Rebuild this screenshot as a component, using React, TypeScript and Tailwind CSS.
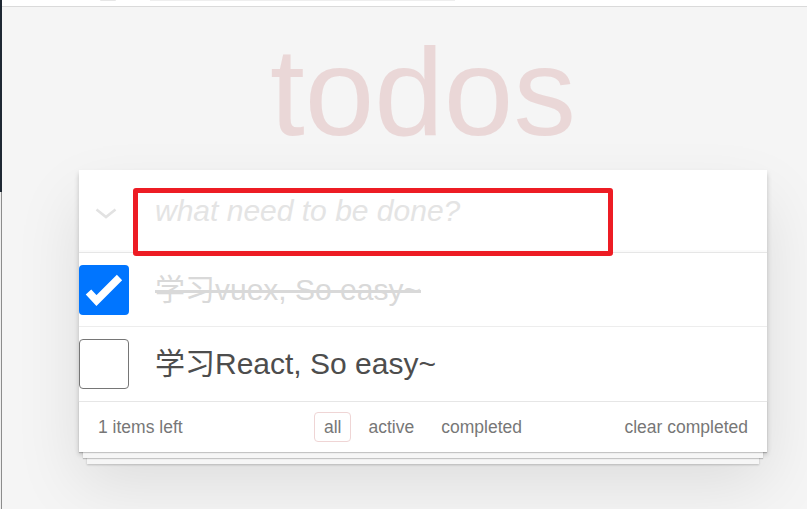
import React, { useState } from 'react';

type Todo = { id: number; title: string; done: boolean };

const initialTodos: Todo[] = [
  { id: 1, title: '学习vuex, So easy~', done: true },
  { id: 2, title: '学习React, So easy~', done: false },
];

const FILTERS = ['all', 'active', 'completed'];

const CheckBox: React.FC<{ checked: boolean }> = ({ checked }) =>
  checked ? (
    <div className="w-[50px] h-[50px] rounded-[4px] bg-[#0075ff] flex items-center justify-center shrink-0">
      <svg width="50" height="50" viewBox="0 0 50 50">
        <polyline points="9.5,27 17.5,35.5 40.5,12.5" fill="none" stroke="#ffffff" strokeWidth="7.5" />
      </svg>
    </div>
  ) : (
    <div className="w-[50px] h-[50px] rounded-[4px] bg-white border-[1.5px] border-[#767676] shrink-0" />
  );

export default function App() {
  const [todos] = useState<Todo[]>(initialTodos);
  const [filter] = useState('all');
  const left = todos.filter(t => !t.done).length;

  return (
    <div className="min-h-screen w-full flex bg-[#f5f5f5] font-['Liberation_Sans','Noto_Sans_CJK_SC',sans-serif]">
      {/* window edge */}
      <div className="w-[2px] shrink-0 flex flex-col">
        <div className="h-[192px] bg-[#1e2833]"></div>
        <div className="flex-1 flex">
          <div className="w-px bg-[#efefef]"></div>
          <div className="w-px bg-[#8c8c8c]"></div>
        </div>
      </div>

      <div className="flex-1 flex flex-col">
        {/* browser strip remnant */}
        <div className="h-[7px] bg-white border-b border-[#dadada] flex items-start">
          <div className="ml-[98px] w-[16px] h-[1px] bg-[#e6e6e6] rounded-b-full"></div>
          <div className="ml-[34px] w-[305px] h-[1px] bg-[#eeeeee]"></div>
        </div>

        <div className="pl-[77px] pt-[22px]">
          <div className="w-[688px]">
            <h1 className="text-center text-[125px] leading-[125px] text-[#ead7d7] font-normal select-none">
              todos
            </h1>

            <section className="mt-[16px] bg-white shadow-[0_2.5px_5px_0_rgba(0,0,0,0.2),0_31px_62px_0_rgba(0,0,0,0.1)]">
              {/* header */}
              <header className="relative z-10 h-[82px] flex items-start shadow-[inset_0_-2px_1px_rgba(0,0,0,0.02)]">
                <div className="w-[54px] shrink-0 pl-[16px] pt-[38px]">
                  <svg width="22" height="11" viewBox="0 0 22 11">
                    <polyline points="1.5,1.5 11,9 20.5,1.5" fill="none" stroke="#e2e2e2" strokeWidth="2.6" />
                  </svg>
                </div>
                <input
                  className="mt-[18px] w-[480px] h-[68px] border-[5px] border-[#ed1c24] rounded-[3px] pl-[17px] pt-0 pb-[23px] text-[30px] text-[#4d4d4d] outline-none bg-transparent placeholder:italic placeholder:text-[#e4e4e4]"
                  placeholder="what need to be done?"
                />
              </header>

              {/* list */}
              <ul className="border-t border-[#e6e6e6]">
                {todos.map((t, i) => (
                  <li
                    key={t.id}
                    className={
                      i < todos.length - 1
                        ? 'h-[74px] border-b border-[#ededed] flex items-center'
                        : 'h-[74px] flex items-center'
                    }
                  >
                    <CheckBox checked={t.done} />
                    <span
                      className={
                        t.done
                          ? 'ml-[26px] text-[30px] leading-[36px] text-[#d9d9d9] line-through'
                          : 'ml-[26px] text-[30px] leading-[36px] text-[#4d4d4d]'
                      }
                    >
                      {t.title}
                    </span>
                  </li>
                ))}
              </ul>

              {/* footer */}
              <footer className="h-[51px] border-t border-[#e6e6e6] px-[19px] grid grid-cols-[1fr_auto_1fr] items-center text-[17.5px] text-[#777777] shadow-[0_1px_1px_rgba(0,0,0,0.2),0_10px_0_-4px_#f6f6f6,0_11px_1px_-4px_rgba(0,0,0,0.2),0_20px_0_-8px_#f6f6f6,0_21px_2px_-8px_rgba(0,0,0,0.2)]">
                <span>{left} items left</span>
                <ul className="flex items-center">
                  {FILTERS.map(f => (
                    <li key={f} className="mx-[3.75px]">
                      <a
                        className={
                          f === filter
                            ? 'block px-[8.75px] py-[3.75px] leading-[20px] border border-[#efd5d5] rounded-[4px]'
                            : 'block px-[8.75px] py-[3.75px] leading-[20px] border border-transparent rounded-[4px]'
                        }
                      >
                        {f}
                      </a>
                    </li>
                  ))}
                </ul>
                <span className="text-right">clear completed</span>
              </footer>
            </section>
          </div>
        </div>
      </div>
    </div>
  );
}
